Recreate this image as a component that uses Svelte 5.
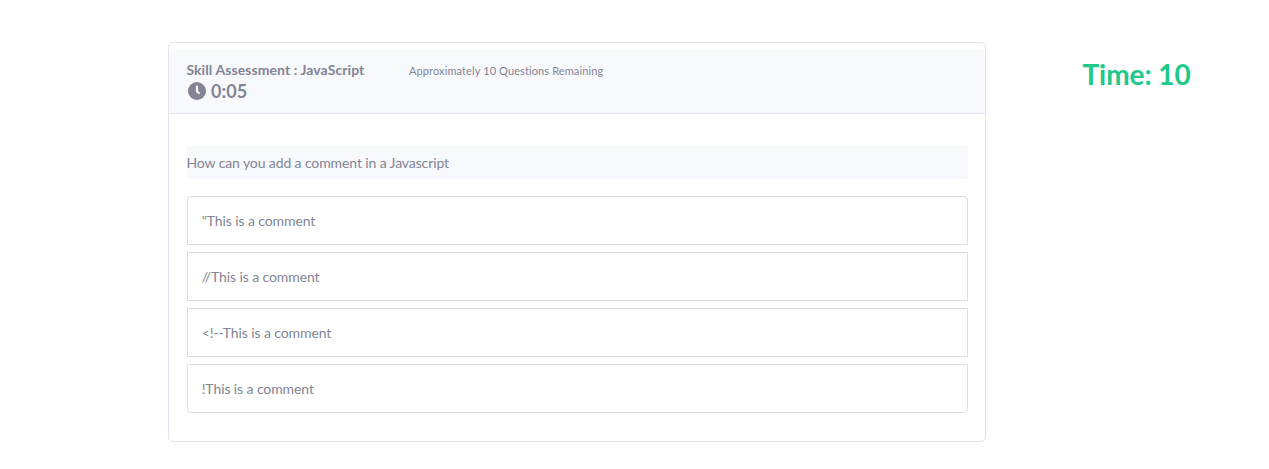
<script>
  const answers = ['"This is a comment', '//This is a comment', '<!--This is a comment', '!This is a comment'];
</script>

<div class="page">
  <main class="card">
    <header>
      <div class="title">
        <h1>Skill Assessment : JavaScript</h1>
        <div class="clock">
          <svg viewBox="0 0 18 18" width="18" height="18"><circle cx="9" cy="9" r="9" fill="currentColor"/><path d="M9 3.6v6l2.7 1.9" fill="none" stroke="#f8f9fd" stroke-width="2.1" stroke-linejoin="round"/></svg>
          <span>0:05</span>
        </div>
      </div>
      <small>Approximately 10 Questions Remaining</small>
    </header>
    <section>
      <p class="question">How can you add a comment in a Javascript</p>
      <ul>
        {#each answers as answer}
          <li>{answer}</li>
        {/each}
      </ul>
    </section>
  </main>
  <aside>Time: 10</aside>
</div>

<style>
  :global(body) { background: #fff; }
  .page { display: flex; align-items: flex-start; padding: 42px 0 0 168px; height: 469px; box-sizing: border-box; overflow: hidden; font-family: Lato, sans-serif; font-size: 14px; color: #838495; }
  .card { width: 818px; height: 400px; box-sizing: border-box; border: 1px solid #e3e3ef; border-radius: 5px; padding-top: 7px; }
  header { display: flex; height: 64px; box-sizing: border-box; padding: 10px 17px 0; background: #f8f9fd; border-bottom: 1px solid #e3e3ef; }
  .title { width: 223px; }
  h1 { margin: 0; font-size: 14px; line-height: 20px; font-weight: 700; letter-spacing: 0.08px; text-indent: 0.4px; white-space: nowrap; }
  .clock { display: flex; align-items: center; gap: 5px; padding-left: 2px; height: 22px; font-size: 18px; font-weight: 700; letter-spacing: 0.1px; }
  .clock svg { display: block; }
  small { font-size: 11px; line-height: 22px; letter-spacing: 0.11px; white-space: nowrap; }
  section { padding: 32px 17px 0; }
  .question { margin: 0 0 17px 1px; height: 33px; line-height: 33px; background: #f8f9fd; text-indent: -0.5px; letter-spacing: -0.11px; }
  ul { display: flex; flex-direction: column; gap: 7px; list-style: none; margin: 0 0 0 1px; padding: 0; }
  li { height: 49px; box-sizing: border-box; border: 1px solid #dedede; padding: 0 14px; line-height: 47px; letter-spacing: -0.1px; text-indent: -0.3px; }
  li:first-child { border-radius: 4px 4px 0 0; }
  li:last-child { border-radius: 0 0 4px 4px; }
  aside { margin: 15px 0 0 96.5px; color: #20c88a; font-size: 28px; line-height: 34px; font-weight: 700; letter-spacing: -0.06px; white-space: nowrap; }
</style>
